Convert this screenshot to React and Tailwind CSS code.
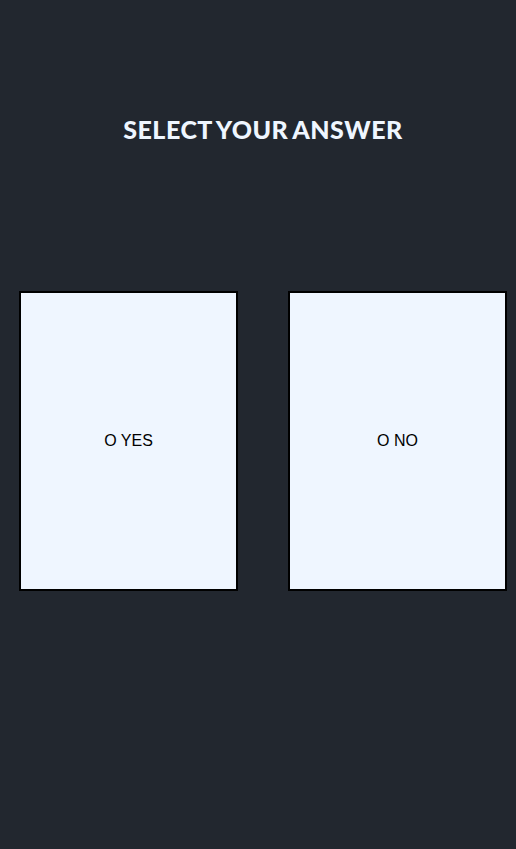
export default function App() {
  return (
    <div className="min-h-[849px] w-[516px] bg-[#22272f] flex flex-col font-['Liberation_Sans',Arial,sans-serif]">
      <h1 className="mt-[113px] pl-[10px] text-center text-[25px] leading-[32px] font-black text-[#eff6ff] tracking-[0.02em] [word-spacing:-0.07em] font-['Lato',sans-serif]">
        SELECT YOUR ANSWER
      </h1>
      <div className="mt-[146px] flex pl-[19px] gap-[50px]">
        <div className="w-[219px] h-[300px] border-2 border-black bg-[#eff6ff] flex items-center justify-center text-[16px] text-black">
          O YES
        </div>
        <div className="w-[219px] h-[300px] border-2 border-black bg-[#eff6ff] flex items-center justify-center text-[16px] text-black">
          O NO
        </div>
      </div>
    </div>
  );
}
